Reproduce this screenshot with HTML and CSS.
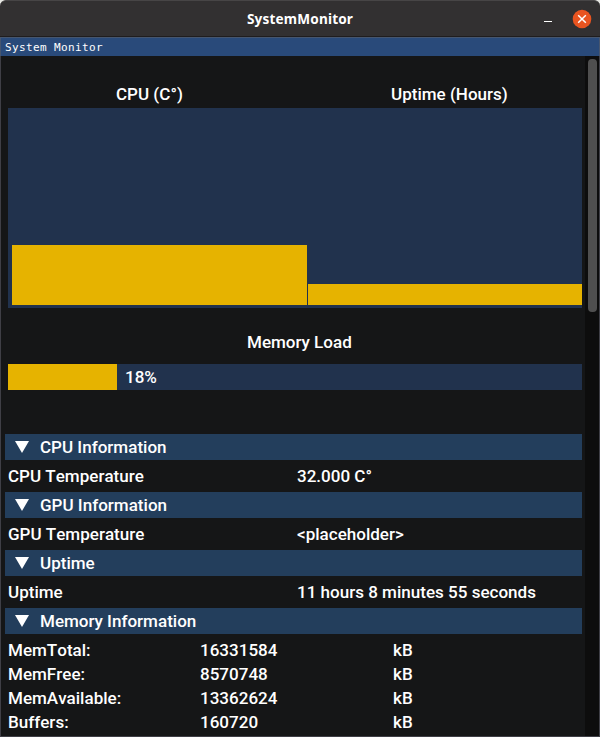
FILE: index.html
```html
<!DOCTYPE html>
<html lang="en">
<head>
<meta charset="utf-8">
<title>SystemMonitor</title>
<link rel="stylesheet" href="styles.css">
</head>
<body>
<div class="window">
  <header class="titlebar">
    <span class="spacer"></span>
    <span class="app-title">SystemMonitor</span>
    <span class="controls">
      <svg class="minimize" width="8" height="1" viewBox="0 0 8 1"><path d="M0 .5h8" stroke="#fff"/></svg>
      <svg class="close" width="20" height="20" viewBox="0 0 20 20"><circle cx="10" cy="10" r="9.3" fill="#e95420"/><path d="M6.2 6.2l7.6 7.6M13.8 6.2l-7.6 7.6" stroke="#fff" stroke-width="1.5"/></svg>
    </span>
  </header>
  <div class="panel-title"><span>System Monitor</span></div>
  <div class="body">
    <main class="content">
      <div class="chart-labels"><span class="cpu-label">CPU (C°)</span><span>Uptime (Hours)</span></div>
      <div class="chart"><div class="bar cpu"></div><div class="bar hours"></div></div>
      <div class="load-label">Memory Load</div>
      <div class="progress"><div class="fill" style="width:109px"></div><span>18%</span></div>
      <div class="section first"><svg width="14" height="12" viewBox="0 0 14 12"><path d="M0 0h14L7 12z" fill="#fff"/></svg><span>CPU Information</span></div>
      <div class="row"><span>CPU Temperature</span><span>32.000 C°</span></div>
      <div class="section"><svg width="14" height="12" viewBox="0 0 14 12"><path d="M0 0h14L7 12z" fill="#fff"/></svg><span>GPU Information</span></div>
      <div class="row"><span>GPU Temperature</span><span>&lt;placeholder&gt;</span></div>
      <div class="section"><svg width="14" height="12" viewBox="0 0 14 12"><path d="M0 0h14L7 12z" fill="#fff"/></svg><span>Uptime</span></div>
      <div class="row"><span>Uptime</span><span>11 hours 8 minutes 55 seconds</span></div>
      <div class="section"><svg width="14" height="12" viewBox="0 0 14 12"><path d="M0 0h14L7 12z" fill="#fff"/></svg><span>Memory Information</span></div>
      <div class="memory">
        <span>MemTotal:</span><span>16331584</span><span>kB</span>
        <span>MemFree:</span><span>8570748</span><span>kB</span>
        <span>MemAvailable:</span><span>13362624</span><span>kB</span>
        <span>Buffers:</span><span>160720</span><span>kB</span>
      </div>
    </main>
    <div class="scrollbar"><div class="thumb"></div></div>
  </div>
</div>
</body>
</html>
```
FILE: styles.css
```css
* { box-sizing: border-box; }
body { margin: 0; background: #e8e8e4; overflow: hidden; }
.window {
  height: 737px;
  display: flex;
  flex-direction: column;
  color: #fff;
  font: 500 17.05px/20px Roboto, sans-serif;
  font-kerning: none;
  white-space: nowrap;
}
.titlebar {
  height: 37px;
  flex: none;
  display: grid;
  grid-template-columns: 1fr auto 1fr;
  align-items: center;
  background: #323031;
  border-top: 1px solid #474546;
  border-bottom: 1px solid #1f1d1e;
  border-radius: 6px 6px 0 0;
}
.app-title { font: 700 13.6px/18px "Noto Sans", sans-serif; letter-spacing: .17px; }
.controls { display: flex; justify-content: flex-end; align-items: center; gap: 20px; padding-right: 8px; }
.minimize { margin-top: 5px; }
.panel-title {
  height: 19px;
  flex: none;
  padding: 3px 0 0 4px;
  background: #294a7a;
  border: 1px solid #46566f;
  border-bottom: 0;
  font: 11px/13px "DejaVu Sans Mono", monospace;
}
.panel-title span { display: block; letter-spacing: .38px; }
.body {
  flex: 1;
  min-height: 0;
  display: flex;
  background: #151617;
  border: 1px solid #3f3f46;
  border-top: 0;
}
.content { flex: 1; padding: 28px 3px 0 4px; }
.chart-labels { display: flex; height: 24px; padding-left: 111px; }
.cpu-label { width: 275px; }
.chart {
  width: 574px;
  height: 200px;
  margin-left: 3px;
  padding: 0 0 3px 4px;
  display: flex;
  align-items: flex-end;
  gap: 1px;
  background: #21324d;
}
.bar { background: #e6b300; }
.cpu { width: 295px; height: 60px; }
.hours { flex: 1; height: 21px; }
.load-label { margin: 24px 0 12px 242px; }
.progress {
  width: 574px;
  height: 26px;
  margin-left: 3px;
  display: flex;
  align-items: center;
  gap: 8px;
  background: #21324d;
}
.fill { height: 100%; background: #e6b300; }
.section {
  height: 26px;
  display: flex;
  align-items: center;
  gap: 11px;
  padding-left: 10px;
  background: #233e5c;
}
.section.first { margin-top: 44px; }
.row {
  height: 32px;
  padding: 6px 0 0 3px;
  display: grid;
  grid-template-columns: 289px 1fr;
}
.memory {
  padding: 6px 0 0 3px;
  display: grid;
  grid-template-columns: 192px 193px 1fr;
  row-gap: 4px;
}
.scrollbar { width: 14px; padding: 3px 2px 0 3px; background: #0d0d0d; }
.thumb { width: 9px; height: 253px; border-radius: 4px; background: #4f4f4f; }
```
